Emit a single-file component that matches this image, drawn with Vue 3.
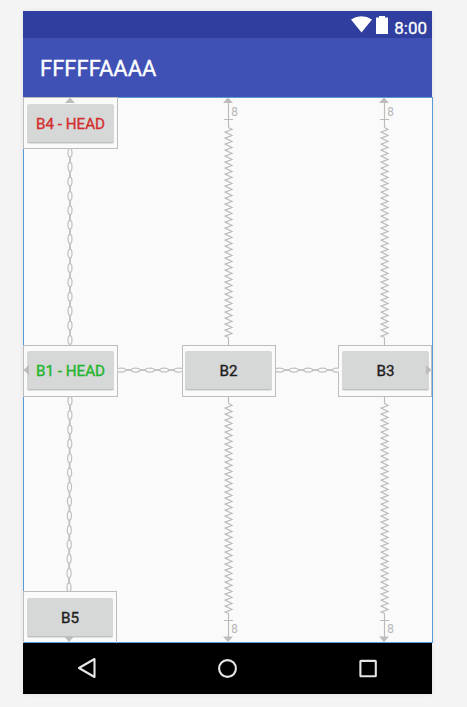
<script setup>
const widgets = [
  { id: 'b4', label: 'B4 - HEAD', tone: 'red' },
  { id: 'b1', label: 'B1 - HEAD', tone: 'green' },
  { id: 'b2', label: 'B2', tone: '' },
  { id: 'b3', label: 'B3', tone: '' },
  { id: 'b5', label: 'B5', tone: '' },
]

// Canvas coordinates: origin is the top-left corner of the layout area.
function zigzag(x, from, count) {
  let d = `M${x} ${from}`
  for (let i = 0; i < count; i++) {
    const y = from + i * 6
    d += `L${x + 3.5} ${y + 2}L${x - 3.5} ${y + 4.6}`
  }
  return d + `L${x} ${from + count * 6}`
}
const springs = [205.5, 361.5].flatMap((x) => [
  { d: zigzag(x, 30.5, 35), x },
  { d: zigzag(x, 306.5, 35), x },
])

const steps = (start, n, pitch) => Array.from({ length: n }, (_, i) => start + i * pitch)
const upper = steps(55.7, 14, 14.4).map((y) => ({ x: 47, y }))
const lower = steps(303.7, 14, 14.37).map((y, i) => ({ x: 47 - i / 13, y }))
const vertical = [...upper, ...lower]
const horizontal = [...steps(98.2, 5, 14.35), ...steps(256.5, 5, 14.35)]
</script>

<template>
  <main class="stage">
    <section class="device">
      <header class="status">
        <svg class="wifi" width="21" height="17" viewBox="0 0 21 17"><path d="M0 3.6Q10.5-3.2 21 3.6L10.5 16.5Z" /></svg>
        <svg class="battery" width="12" height="18" viewBox="0 0 12 18"><path d="M3 0H9V1.4H12V18H0V1.4H3Z" /></svg>
        <span class="clock">8:00</span>
      </header>
      <div class="appbar">FFFFFAAAA</div>
      <div class="canvas">
        <div v-for="w in widgets" :key="w.id" class="widget" :class="w.id">
          <div class="button" :class="w.tone">{{ w.label }}</div>
        </div>
        <svg class="links" width="410" height="546" viewBox="0 0 410 546">
          <defs>
            <clipPath id="gaps">
              <path d="M0 51H94V248H0zM0 299H94V494H0zM94 248H160V299H94zM252 248H316V299H252z" />
            </clipPath>
          </defs>
          <g class="line">
            <path v-for="(s, i) in springs" :key="i" class="spring" :d="s.d" />
            <path v-for="x in [205.5, 361.5]" :key="x" :d="`M${x} 5V30.5M${x - 4.5} 22.5h9M${x} 240.5V248M${x} 300V306.5M${x} 516.5V540M${x - 4.5} 523.5h9`" />
          </g>
          <g clip-path="url(#gaps)">
            <path class="bar" d="M47 52V247M47 300L46 494M95 273H159M253 273H315" />
            <g class="ring">
              <ellipse v-for="(p, i) in vertical" :key="'v' + i" :cx="p.x" :cy="p.y" rx="2" ry="4.4" />
              <ellipse v-for="x in horizontal" :key="'h' + x" :cx="x" cy="273" rx="4.4" ry="2" />
            </g>
          </g>
          <g class="arrow">
            <path d="M47 .5l5 5.5h-10zM205 .5l5 5.5h-10zM361 .5l5 5.5h-10z" />
            <path d="M46 545l-5-5.5h10zM205 545l-5-5.5h10zM361 545l-5-5.5h10z" />
            <path d="M.5 273l5.5-5v10zM408.5 273l-5.5-5v10z" />
          </g>
          <g class="margin">
            <text transform="translate(208.3 19.2) scale(.9 1)">8</text>
            <text transform="translate(364.3 19.2) scale(.9 1)">8</text>
            <text transform="translate(208.3 536.2) scale(.9 1)">8</text>
            <text transform="translate(364.3 536.2) scale(.9 1)">8</text>
          </g>
        </svg>
      </div>
      <nav class="nav">
        <svg width="20" height="22" viewBox="0 0 20 22"><path d="M17.5 2V20L2 11Z" /></svg>
        <svg width="20" height="22" viewBox="0 0 20 22"><circle cx="10.5" cy="11.5" r="8.4" /></svg>
        <svg width="20" height="22" viewBox="0 0 20 22"><rect x="2.4" y="3.9" width="15.4" height="15.4" rx=".5" /></svg>
      </nav>
    </section>
  </main>
</template>

<style>
body { background: #f4f4f4; }
</style>

<style scoped>
.stage {
  box-sizing: border-box;
  width: 467px;
  height: 707px;
  padding: 11px 0 0 23px;
  overflow: hidden;
  background: #f4f4f4;
  font-family: Roboto, "Liberation Sans", sans-serif;
}
.device {
  display: flex;
  flex-direction: column;
  width: 409px;
  height: 683px;
  box-shadow: 0 0 5px rgba(0, 0, 0, 0.07);
}
.status {
  box-sizing: border-box;
  display: flex;
  align-items: flex-start;
  justify-content: flex-end;
  height: 27px;
  padding: 5px 5px 0 0;
  background: #303f9f;
  color: #fff;
}
.status svg { fill: #fff; }
.battery { margin-left: 4px; }
.clock {
  margin: 2px 0 0 6px;
  font-size: 17px;
  line-height: 20px;
  -webkit-text-stroke: 0.3px;
}
.appbar {
  box-sizing: border-box;
  height: 59px;
  padding-left: 17px;
  background: #3f51b5;
  color: #fff;
  font-size: 22px;
  -webkit-text-stroke: 0.3px;
  line-height: 61px;
}
.canvas {
  box-sizing: border-box;
  position: relative;
  width: 410px;
  height: 546px;
  border: 1px solid #5b9bd5;
  background: #fafafa;
}
.links { position: absolute; top: -1px; left: -1px; }
.line { fill: none; stroke: #bbb; stroke-width: 1.15; }
.bar { fill: none; stroke: #c4c4c4; stroke-width: 2; }
.ring { fill: #fafafa; stroke: #c2c2c2; stroke-width: 1.25; }
.arrow { fill: #bdbdbd; }
.margin { fill: #b8b8b8; font-size: 13px; }
.widget {
  box-sizing: border-box;
  position: absolute;
  display: flex;
  width: 95px;
  height: 52px;
  padding: 5px 3px 0;
  border: 1px solid #bdbdbd;
}
.b4 { left: -1px; top: -1px; padding-top: 6px; }
.b1 { left: -1px; top: 247px; }
.b2 { left: 158px; top: 247px; width: 94px; padding: 5px 3px 0 2px; }
.b3 { left: 314px; top: 247px; width: 94px; padding: 5px 2px 0 3px; }
.b5 { left: -1px; top: 493px; width: 94px; padding-top: 6px; border-bottom: 0; }
.button {
  flex: 1;
  height: 38px;
  border-bottom: 1px solid #bfc1c0;
  border-radius: 2px;
  background: #d6d7d7;
  box-shadow: 0 1px 0 #dfe0e0;
  color: #1d1d1d;
  font-size: 15.2px;
  -webkit-text-stroke: 0.35px;
  line-height: 40px;
  text-align: center;
  white-space: nowrap;
}
.red { color: #d32f2f; }
.green { color: #1fb52c; }
.nav {
  display: grid;
  grid-template-columns: repeat(3, 140.5px);
  justify-content: center;
  place-items: center;
  height: 51px;
  padding: 0 1px 1px 0;
  box-sizing: border-box;
  background: #000;
}
.nav svg { fill: none; stroke: #e6e6e6; stroke-width: 2.1; stroke-linejoin: round; }
</style>
